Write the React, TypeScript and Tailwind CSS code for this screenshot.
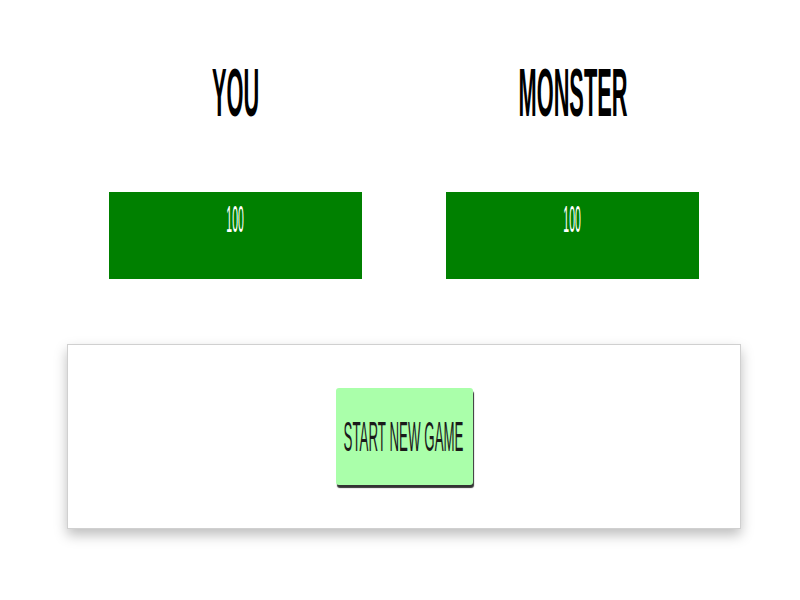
import React from "react";

function Squeezed({ children, className }: { children: React.ReactNode; className: string }) {
  return (
    <span className={`inline-block shrink-0 whitespace-nowrap leading-none ${className}`}>{children}</span>
  );
}

function Combatant({ name }: { name: string }) {
  return (
    <div className="flex w-[253px] flex-col items-center">
      <h2 className="flex h-[68px] w-full justify-center overflow-visible text-[68px] font-bold leading-none text-black">
        <Squeezed className="scale-x-[0.32]">{name}</Squeezed>
      </h2>
      <div className="mt-[66px] flex h-[87px] w-[253px] justify-center bg-[#008000] pt-[10px]">
        <Squeezed className="text-[36px] text-white scale-x-[0.29]">100</Squeezed>
      </div>
    </div>
  );
}

export default function App() {
  return (
    <div className="min-h-screen bg-white pl-[8px] font-['Liberation_Sans',Arial,sans-serif]">
      <div className="flex justify-center gap-[84px] pt-[58px]">
        <Combatant name="YOU" />
        <Combatant name="MONSTER" />
      </div>
      <section className="mx-auto mt-[65px] flex h-[185px] w-[674px] items-center justify-center border border-[#d0d0d0] bg-white shadow-[0_6px_12px_rgba(0,0,0,0.26)]">
        <button className="flex h-[97px] w-[137px] items-center justify-center rounded-[3px] bg-[#aaffaa] text-[43px] text-[#1a1a1a] shadow-[1px_3px_1px_rgba(0,0,0,0.8)]">
          <Squeezed className="scale-x-[0.31]">START NEW GAME</Squeezed>
        </button>
      </section>
    </div>
  );
}
